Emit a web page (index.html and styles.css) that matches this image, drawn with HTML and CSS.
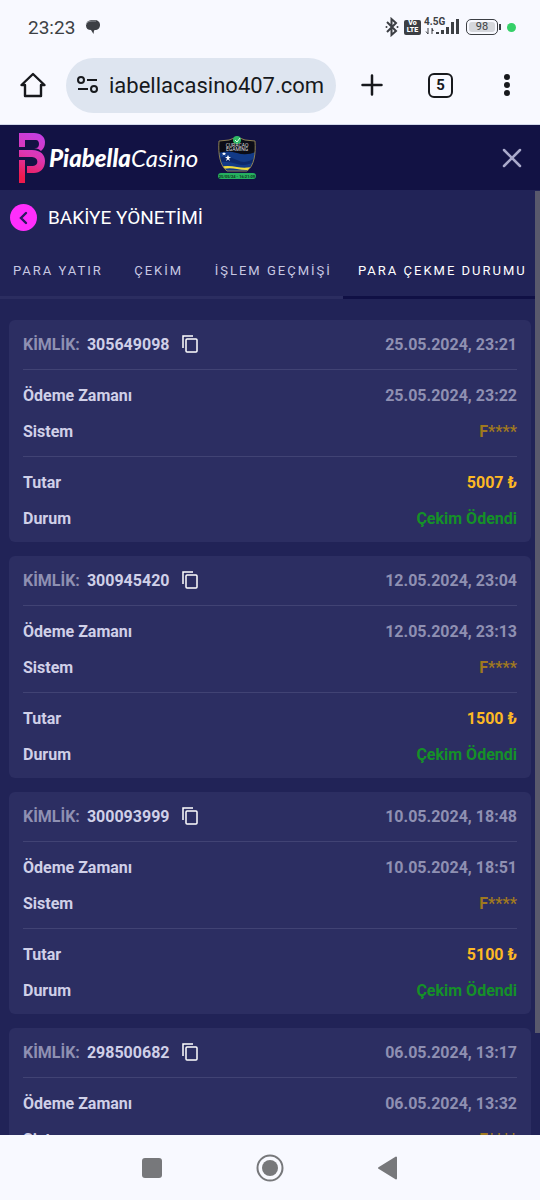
FILE: index.html
```html
<!DOCTYPE html>
<html lang="tr">
<head>
    <meta charset="UTF-8">
    <meta name="viewport" content="width=device-width, initial-scale=1.0">
    <title>Bakiye Yönetimi</title>
    <link rel="stylesheet" href="styles.css">
</head>
<body>
    <div class="status-bar">
        <span class="clock">23:23</span>
        <svg class="chat-icon" width="16" height="16" viewBox="0 0 16 16">
            <path d="M1 6.500C1 2.500 4 1 8 1h1c4 0 6 2 6 5s-2 5-5 5l-1 .5L8.500 15 6 11C3 11 1 9.500 1 6.500z" fill="#3c3f44"/>
            <path d="M1 6C1.500 3 4 2 7 2h4" fill="none" stroke="#b5b8be" stroke-width=".7"/>
        </svg>
        <div class="status-icons">
            <svg width="14" height="20" viewBox="0 0 14 20" fill="none" stroke="#3c3f44" stroke-width="2">
                <path d="M2 5l9 9-4.500 4V2L11 6l-9 9"/>
                <path d="M1.500 10h.01M12.500 10h.01" stroke-linecap="round"/>
            </svg>
            <span class="volte">Vo<br>LTE</span>
            <svg class="signal" width="37" height="20" viewBox="0 0 37 20" fill="#3c3f44">
                <text x="0" y="8" class="net-type">4.5G</text>
                <path d="M4 11v6L2 14.500M8 11v6" stroke="#3c3f44" fill="none"/>
                <path d="M8 11l2 3H8z"/>
                <rect x="12" y="15" width="3" height="2"/>
                <rect x="17" y="13" width="3" height="4"/>
                <rect x="22" y="10" width="3" height="7"/>
                <rect x="27" y="5" width="3" height="12"/>
                <rect x="32" y="2" width="3" height="15"/>
            </svg>
            <span class="battery"><span class="charge">98</span></span>
            <span class="green-dot"></span>
        </div>
    </div>

    <div class="browser-bar">
        <button class="home-btn" aria-label="Home">
            <svg width="26" height="26" viewBox="0 0 26 26" fill="none" stroke="#17191d" stroke-width="2.400" stroke-linejoin="round">
                <path d="M1.500 13H5v11h16V13h3.500L13 2z"/>
            </svg>
        </button>
        <label class="address">
            <svg width="22" height="20" viewBox="0 0 22 20" fill="none" stroke="#17191d" stroke-width="2">
                <circle cx="4" cy="5" r="3"/>
                <circle cx="17" cy="14" r="3"/>
                <path d="M10 5h10M1 14h10"/>
            </svg>
            <input type="text" value="iabellacasino407.com" aria-label="Address">
        </label>
        <button class="new-tab" aria-label="New tab">
            <svg width="22" height="22" viewBox="0 0 22 22" stroke="#17191d" stroke-width="2.500" stroke-linecap="round">
                <path d="M11 1.500v19M1.500 11h19"/>
            </svg>
        </button>
        <button class="tab-count" aria-label="Tabs">5</button>
        <button class="menu-btn" aria-label="Menu">
            <svg width="8" height="24" viewBox="0 0 8 24" fill="#17191d">
                <circle cx="4" cy="4" r="3"/>
                <circle cx="4" cy="12" r="3"/>
                <circle cx="4" cy="20" r="3"/>
            </svg>
        </button>
    </div>

    <header class="site-header">
        <a href="#" class="logo">
            <svg width="28" height="50" viewBox="0 0 28 50" fill="none">
                <defs>
                    <linearGradient id="pink" gradientUnits="userSpaceOnUse" x1="22" y1="0" x2="4" y2="44">
                        <stop offset="0" stop-color="#c23fe6"/>
                        <stop offset=".5" stop-color="#dc37b4"/>
                        <stop offset="1" stop-color="#ee1a4c"/>
                    </linearGradient>
                </defs>
                <path fill="url(#pink)" d="M1 0h15c7 0 11 4 11 9 0 4-1 6-4 9-3-3-6-3-9-3h4c4 0 4-8 0-8H7v7H1z"/>
                <path fill="url(#pink)" d="M1 17h13c9 0 13 5 13 11 0 8-5 12-11 12H9v-7h6c6 0 6-9-1-9H1z"/>
                <path fill="url(#pink)" d="M1 27h6v23H1z"/>
            </svg>
            <span class="brand"><b>Piabella</b>Casino</span>
        </a>
        <a href="#" class="license" aria-label="License">
            <svg width="38" height="44" viewBox="0 0 38 44">
                <defs>
                    <clipPath id="shield">
                        <path d="M1 5Q12 5 19 1q7 4 18 4c1 13-1 25-8 30H9C2 30 0 18 1 5z"/>
                    </clipPath>
                </defs>
                <g clip-path="url(#shield)">
                    <rect width="38" height="36" fill="#0b0c16"/>
                    <path d="M0 17q10-3 19 0t19-1v20H0z" fill="#123a87"/>
                    <path d="M0 22q10-3 19 2t19-3v4q-11 6-19 3T0 26z" fill="#0c286b"/>
                    <path d="M0 31q10-2 19 0t19-1v3q-10 2-19 0T0 34z" fill="#f0dc3c"/>
                </g>
                <path d="M1 5Q12 5 19 1q7 4 18 4c1 13-1 25-8 30H9C2 30 0 18 1 5z" fill="none" stroke="#8d8054"/>
                <path d="M10 19l1 2h2l-2 1.500 1 2.500-2-1.500L8 25l1-2.500L7 21h2zM6 16l.5 1H8l-1 1 .5 1.500L6 18.500l-1.500 1L5 18l-1-1h1.500z" fill="#fff"/>
                <circle cx="19" cy="4" r="4" fill="#2fb866"/>
                <path d="M17 4l2 2 3-4" fill="none" stroke="#d9ffe6"/>
                <text x="19" y="11" class="seal-text">CURAÇAO</text>
                <text x="19" y="15" class="seal-text">EGAMING</text>
                <rect x="0" y="37" width="38" height="6" rx="3" fill="#27b05f"/>
                <text x="19" y="42" class="seal-date">25/05/24 - 16:21:09</text>
            </svg>
        </a>
        <button class="close-btn" aria-label="Kapat">
            <svg width="20" height="20" viewBox="0 0 20 20" stroke="#a9a9cb" stroke-width="2.500" stroke-linecap="round">
                <path d="M2 2l16 16M18 2L2 18"/>
            </svg>
        </button>
    </header>

    <main class="content">
        <div class="title-row">
            <button class="back-btn" aria-label="Geri">
                <svg width="10" height="16" viewBox="0 0 10 16" fill="none" stroke="#2b1760" stroke-width="2.400" stroke-linecap="round">
                    <path d="M7 3L2 8l5 5"/>
                </svg>
            </button>
            <h1>BAKİYE YÖNETİMİ</h1>
        </div>

        <nav class="tabs">
            <a href="#">PARA YATIR</a>
            <a href="#">ÇEKİM</a>
            <a href="#">İŞLEM GEÇMİŞİ</a>
            <a href="#" class="active">PARA ÇEKME DURUMU</a>
        </nav>

        <div class="list">
            <section class="card">
                <div class="row">
                    <span class="muted">KİMLİK:</span>
                    <span class="id">305649098</span>
                    <button class="copy-btn" aria-label="Kopyala">
                        <svg width="16" height="18" viewBox="0 0 16 18" fill="none" stroke="#fff" stroke-width="1.500">
                            <path d="M1 13V1h10"/>
                            <rect x="4" y="4" width="11" height="13" rx="1"/>
                        </svg>
                    </button>
                    <span class="value muted">25.05.2024, 23:21</span>
                </div>
                <hr>
                <div class="row">Ödeme Zamanı <span class="value muted">25.05.2024, 23:22</span></div>
                <div class="row">Sistem <span class="value system">F****</span></div>
                <hr>
                <div class="row">Tutar <span class="value amount">5007 ₺</span></div>
                <div class="row">Durum <span class="value paid">Çekim Ödendi</span></div>
            </section>

            <section class="card">
                <div class="row">
                    <span class="muted">KİMLİK:</span>
                    <span class="id">300945420</span>
                    <button class="copy-btn" aria-label="Kopyala">
                        <svg width="16" height="18" viewBox="0 0 16 18" fill="none" stroke="#fff" stroke-width="1.500">
                            <path d="M1 13V1h10"/>
                            <rect x="4" y="4" width="11" height="13" rx="1"/>
                        </svg>
                    </button>
                    <span class="value muted">12.05.2024, 23:04</span>
                </div>
                <hr>
                <div class="row">Ödeme Zamanı <span class="value muted">12.05.2024, 23:13</span></div>
                <div class="row">Sistem <span class="value system">F****</span></div>
                <hr>
                <div class="row">Tutar <span class="value amount">1500 ₺</span></div>
                <div class="row">Durum <span class="value paid">Çekim Ödendi</span></div>
            </section>

            <section class="card">
                <div class="row">
                    <span class="muted">KİMLİK:</span>
                    <span class="id">300093999</span>
                    <button class="copy-btn" aria-label="Kopyala">
                        <svg width="16" height="18" viewBox="0 0 16 18" fill="none" stroke="#fff" stroke-width="1.500">
                            <path d="M1 13V1h10"/>
                            <rect x="4" y="4" width="11" height="13" rx="1"/>
                        </svg>
                    </button>
                    <span class="value muted">10.05.2024, 18:48</span>
                </div>
                <hr>
                <div class="row">Ödeme Zamanı <span class="value muted">10.05.2024, 18:51</span></div>
                <div class="row">Sistem <span class="value system">F****</span></div>
                <hr>
                <div class="row">Tutar <span class="value amount">5100 ₺</span></div>
                <div class="row">Durum <span class="value paid">Çekim Ödendi</span></div>
            </section>

            <section class="card">
                <div class="row">
                    <span class="muted">KİMLİK:</span>
                    <span class="id">298500682</span>
                    <button class="copy-btn" aria-label="Kopyala">
                        <svg width="16" height="18" viewBox="0 0 16 18" fill="none" stroke="#fff" stroke-width="1.500">
                            <path d="M1 13V1h10"/>
                            <rect x="4" y="4" width="11" height="13" rx="1"/>
                        </svg>
                    </button>
                    <span class="value muted">06.05.2024, 13:17</span>
                </div>
                <hr>
                <div class="row">Ödeme Zamanı <span class="value muted">06.05.2024, 13:32</span></div>
                <div class="row">Sistem <span class="value system">F****</span></div>
            </section>
        </div>
        <div class="scroll-thumb"></div>
    </main>

    <div class="system-nav">
        <button aria-label="Recent apps">
            <svg width="28" height="28" viewBox="0 0 28 28"><rect x="4" y="4" width="20" height="20" rx="3" fill="#77787b"/></svg>
        </button>
        <button aria-label="Home screen">
            <svg width="28" height="28" viewBox="0 0 28 28">
                <circle cx="14" cy="14" r="12.500" fill="none" stroke="#77787b" stroke-width="2"/>
                <circle cx="14" cy="14" r="8" fill="#77787b"/>
            </svg>
        </button>
        <button aria-label="Back">
            <svg width="28" height="28" viewBox="0 0 28 28"><path d="M5 14l17-10.500v21z" fill="#77787b" stroke="#77787b" stroke-width="2" stroke-linejoin="round"/></svg>
        </button>
    </div>
</body>
</html>
```
FILE: styles.css
```css
* {
    box-sizing: border-box;
}

body {
    margin: 0;
    height: 100vh;
    display: flex;
    flex-direction: column;
    overflow: hidden;
    font-family: Roboto, sans-serif;
    background-color: #f8f9ff;
}

button {
    display: flex;
    align-items: center;
    justify-content: center;
    flex-shrink: 0;
    padding: 0;
    border: none;
    background: none;
    font-family: inherit;
    cursor: pointer;
}

a {
    color: inherit;
    text-decoration: none;
}

svg {
    display: block;
    flex-shrink: 0;
}

/* phone status bar */
.status-bar {
    display: flex;
    align-items: center;
    height: 54px;
    padding: 0 24px 0 28px;
    flex-shrink: 0;
    color: #3c3f44;
}

.clock {
    font-size: 19px;
}

.chat-icon {
    margin-left: 10px;
}

.status-icons {
    display: flex;
    align-items: center;
    gap: 5px;
    margin-left: auto;
}

.volte {
    width: 17px;
    height: 15px;
    border-radius: 2px;
    background-color: #3c3f44;
    color: #fff;
    font-size: 7px;
    font-weight: 900;
    line-height: 7px;
    text-align: center;
}

.signal {
    margin-left: -2px;
}

.net-type {
    font-size: 10px;
    font-weight: 700;
}

.battery {
    position: relative;
    width: 32px;
    height: 16px;
    padding: 2px;
    border: 1px solid #3c3f44;
    border-radius: 5px;
}

.battery::after {
    content: "";
    position: absolute;
    top: 4px;
    right: -4px;
    width: 2px;
    height: 6px;
    background-color: #3c3f44;
}

.charge {
    display: block;
    border-radius: 3px;
    background-color: #d5d7dc;
    font-size: 11px;
    line-height: 10px;
    text-align: center;
}

.green-dot {
    width: 9px;
    height: 9px;
    margin-left: 4px;
    border-radius: 50%;
    background-color: #35d068;
}

/* browser toolbar */
.browser-bar {
    display: flex;
    align-items: center;
    height: 71px;
    padding: 0 29px 8px 20px;
    flex-shrink: 0;
    border-bottom: 1px solid #d3d9ea;
}

.address {
    display: flex;
    flex: 1;
    min-width: 0;
    align-items: center;
    gap: 10px;
    height: 55px;
    margin: 0 25px 0 20px;
    padding: 0 10px 0 11px;
    border-radius: 28px;
    background-color: #dee5f0;
}

.address input {
    flex: 1;
    min-width: 0;
    padding: 0;
    border: none;
    background: none;
    font-family: inherit;
    font-size: 22px;
    color: #17191d;
}

.tab-count {
    width: 25px;
    height: 25px;
    margin: 0 50px 0 45px;
    border: 2px solid #17191d;
    border-radius: 6px;
    font-size: 15px;
    font-weight: 700;
    color: #17191d;
}

/* site header */
.site-header {
    display: flex;
    align-items: center;
    height: 65px;
    padding: 0 18px;
    flex-shrink: 0;
    background-color: #121244;
}

.logo {
    display: flex;
    align-items: center;
    gap: 3px;
}

.brand {
    font-family: Lato, sans-serif;
    font-size: 24px;
    font-style: italic;
    color: #fff;
}

.brand b {
    font-weight: 900;
}

.license {
    margin-left: 20px;
}

.seal-text {
    font-size: 5px;
    text-anchor: middle;
    fill: #ddd;
}

.seal-date {
    font-size: 4px;
    font-weight: 700;
    text-anchor: middle;
    fill: #0b3a1e;
}

.close-btn {
    margin-left: auto;
}

/* page */
.content {
    position: relative;
    flex: 1;
    min-height: 0;
    overflow: hidden;
    background-color: #212357;
}

.title-row {
    display: flex;
    align-items: center;
    gap: 11px;
    height: 55px;
    padding: 0 10px;
}

.back-btn {
    width: 27px;
    height: 27px;
    border-radius: 50%;
    background-color: #ff2efc;
}

h1 {
    margin: 0;
    font-size: 19px;
    font-weight: 400;
    color: #fff;
}

.tabs {
    display: flex;
}

.tabs a {
    min-width: 88px;
    height: 54px;
    padding: 0 11px 0 13px;
    border-bottom: 3px solid #2b2d60;
    font-size: 13px;
    line-height: 52px;
    letter-spacing: 2px;
    text-align: center;
    white-space: nowrap;
    color: #c8c8e2;
}

.tabs .active {
    flex: 1;
    border-color: #101045;
    color: #fff;
}

.list {
    display: flex;
    flex-direction: column;
    gap: 14px;
    padding: 21px 9px;
}

.card {
    padding: 6px 14px;
    border-radius: 6px;
    background-color: #2c2e62;
    font-size: 16px;
    font-weight: 700;
    color: #d0d0e8;
}

.row {
    display: flex;
    align-items: center;
    height: 36px;
}

.card hr {
    height: 1px;
    margin: 7px 0;
    border: none;
    background-color: #414374;
}

.value {
    margin-left: auto;
}

.id {
    margin-left: 7px;
}

.copy-btn {
    margin-left: 12px;
}

.muted {
    color: #8f90b2;
}

.system {
    color: #a0791f;
}

.amount {
    color: #fdb924;
}

.paid {
    color: #159128;
}

.scroll-thumb {
    position: absolute;
    top: 1px;
    right: 0;
    width: 5px;
    height: 842px;
    background-color: #59596c;
}

/* android navigation */
.system-nav {
    display: flex;
    align-items: center;
    justify-content: center;
    gap: 90px;
    height: 65px;
    flex-shrink: 0;
}
```
